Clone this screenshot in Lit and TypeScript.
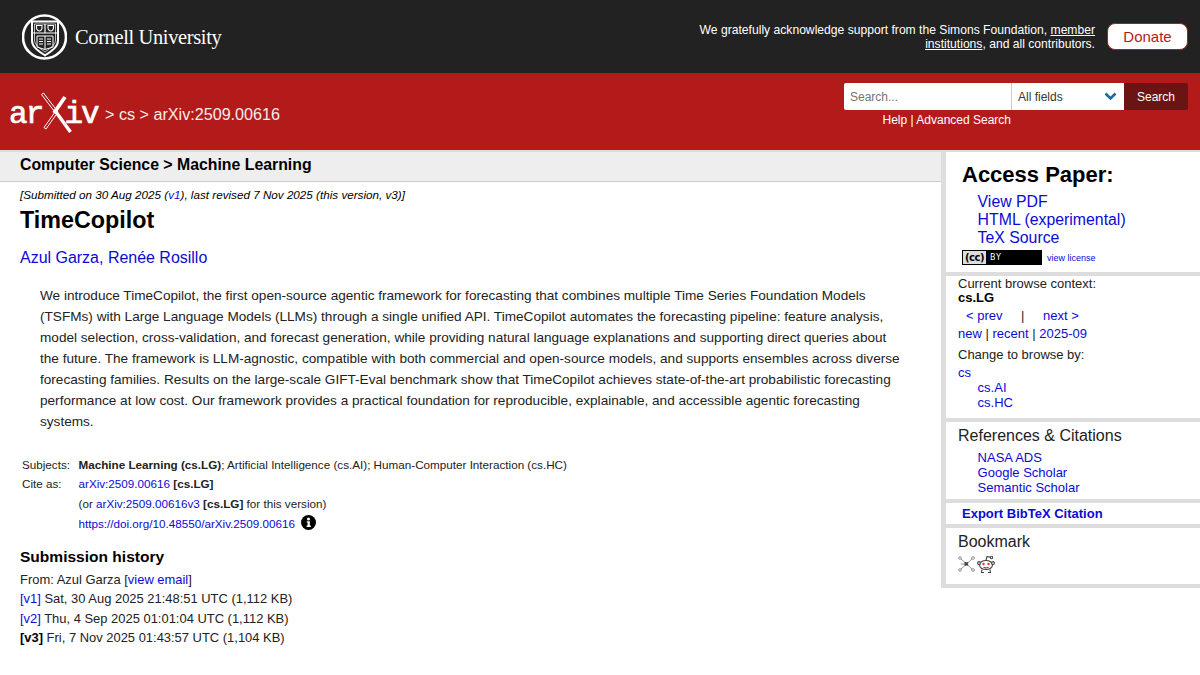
import { LitElement, html, css } from "lit";
import { customElement } from "lit/decorators.js";

@customElement("app-root")
export class AppRoot extends LitElement {
  static styles = css`
    :host {
      display: block;
      font-family: "Liberation Sans", Arial, sans-serif;
      color: #000;
      background: #fff;
      height: 675px;
      overflow: hidden;
    }
    a {
      color: #0a0ad4;
      text-decoration: none;
    }

    /* top strip */
    .cu {
      height: 73px;
      background: #222;
      display: flex;
      align-items: center;
      justify-content: space-between;
      padding: 0 12px 0 22px;
      box-sizing: border-box;
    }
    .cu-logo {
      display: flex;
      align-items: center;
      gap: 8px;
      color: #fff;
      font-family: "Liberation Serif", serif;
      font-size: 20.5px;
      letter-spacing: -0.38px;
    }
    .cu-logo span {
      padding-top: 2px;
    }
    .cu-right {
      display: flex;
      align-items: center;
      gap: 12px;
    }
    .thanks {
      width: 400px;
      text-align: right;
      color: #fff;
      font-size: 12.13px;
      line-height: 14px;
    }
    .thanks a {
      color: #fff;
      text-decoration: underline;
    }
    .donate {
      width: 81px;
      height: 27px;
      box-sizing: border-box;
      background: #fff;
      color: #b31b1b;
      border: 1px solid #b31b1b;
      border-radius: 8px;
      font-size: 15px;
      display: flex;
      align-items: center;
      justify-content: center;
    }

    /* red header */
    .head {
      height: 77px;
      background: #b31b1b;
      display: flex;
      justify-content: space-between;
      padding: 0 12px 0 9px;
      box-sizing: border-box;
    }
    .crumbs {
      display: flex;
      align-items: center;
      gap: 4px;
      height: 82px;
      color: #fff;
      font-size: 16.15px;
    }
    .crumbs span {
      opacity: 0.92;
    }
    .arxiv-logo {
      display: flex;
      align-items: center;
      color: #fff;
      font-family: "Liberation Mono", monospace;
      font-size: 31px;
      line-height: 1;
      width: 92px;
      height: 44px;
    }
    .arxiv-logo b {
      font-weight: 400;
      letter-spacing: -1.9px;
      -webkit-text-stroke: 0.7px #fff;
    }
    .arxiv-logo svg {
      margin: -2px -8px 0 -1px;
      flex: none;
    }
    .search {
      padding-top: 10px;
      display: flex;
      flex-direction: column;
      align-items: flex-start;
    }
    .search-row {
      display: flex;
      height: 27px;
      font-size: 12px;
    }
    .search-input {
      width: 168px;
      background: #fff;
      color: #757575;
      box-sizing: border-box;
      padding-left: 6px;
      display: flex;
      align-items: center;
      border-radius: 2px 0 0 2px;
      border-right: 1px solid #ccc;
    }
    .search-field {
      width: 112px;
      background: #fff;
      color: #363636;
      box-sizing: border-box;
      padding: 0 7px 0 6px;
      display: flex;
      align-items: center;
      justify-content: space-between;
    }
    .search-btn {
      width: 64px;
      background: #6b1414;
      color: #fff;
      display: flex;
      align-items: center;
      justify-content: center;
      border-radius: 0 2px 2px 0;
    }
    .search-links {
      margin: 3px 0 0 38.5px;
      color: #fff;
      font-size: 12px;
      line-height: 14px;
    }
    .search-links a {
      color: #fff;
    }

    /* body */
    .page {
      display: flex;
      border-top: 2px solid #ddd;
    }
    .main {
      width: 941px;
      flex: none;
    }
    .subject {
      height: 30px;
      box-sizing: border-box;
      background: #eee;
      border-bottom: 1px solid #ccc;
      padding: 4px 20px 0;
      font-size: 15.84px;
      line-height: 18px;
      font-weight: 700;
    }
    .content {
      padding: 0 20px;
    }
    .dateline {
      font-size: 11.68px;
      font-style: italic;
      line-height: 13px;
      margin-top: 6px;
    }
    h1 {
      margin: 5px 0 0;
      font-size: 23.3px;
      line-height: 28px;
    }
    .authors {
      margin-top: 15px;
      font-size: 15.98px;
      line-height: 18px;
      color: #0a0ad4;
    }
    .abstract {
      margin: 18px 20px 0 20px;
      font-size: 13.6px;
      line-height: 21px;
      color: #222;
    }
    .meta {
      margin: 23px 0 0 2px;
      display: grid;
      grid-template-columns: 56.5px 1fr;
      grid-template-rows: 19px repeat(3, 20px);
      font-size: 11.68px;
      color: #222;
      line-height: 20px;
    }
    .meta .row {
      display: flex;
      align-items: center;
      gap: 6px;
    }
    .info {
      width: 15px;
      height: 15px;
      flex: none;
      margin-top: -4px;
    }
    h2 {
      margin: 14px 0 0;
      font-size: 15.54px;
      line-height: 18px;
    }
    .history {
      margin-top: 4px;
      font-size: 12.95px;
      line-height: 19.4px;
      color: #222;
    }
    .history b {
      color: #000;
    }

    /* right column */
    .side {
      width: 259px;
      flex: none;
      height: 436px;
      box-sizing: border-box;
      border-left: 5px solid #ddd;
      border-bottom: 4px solid #ddd;
      display: flex;
      flex-direction: column;
    }
    .box {
      border-bottom: 4px solid #ddd;
      padding-left: 12px;
    }
    .box:last-child {
      border-bottom: 0;
    }
    .access {
      height: 124px;
      box-sizing: border-box;
      padding: 10px 0 0 16px;
    }
    .access h3 {
      margin: 0;
      font-size: 22px;
      line-height: 26px;
    }
    .access ul {
      list-style: none;
      margin: 5px 0 0 15.6px;
      padding: 0;
      font-size: 15.84px;
      line-height: 18px;
    }
    .license {
      display: flex;
      align-items: center;
      gap: 5px;
      margin-top: 3px;
      font-size: 9px;
    }
    .cc {
      width: 80px;
      height: 15px;
      box-sizing: border-box;
      background: #000;
      border: 1px solid #000;
      color: #fff;
      display: flex;
    }
    .cc-left {
      width: 23px;
      background: #ddd;
      color: #000;
      font-family: "DejaVu Sans", sans-serif;
      font-size: 10px;
      font-weight: 700;
      line-height: 13px;
      text-align: center;
      letter-spacing: -0.5px;
    }
    .cc-by {
      font-family: "DejaVu Sans", sans-serif;
      font-size: 8px;
      line-height: 13px;
      letter-spacing: 1px;
      padding-left: 4px;
    }
    .browse {
      height: 146px;
      box-sizing: border-box;
      font-size: 13px;
      line-height: 14px;
      padding-top: 1px;
      color: #222;
    }
    .browse b {
      color: #000;
    }
    .browse > div {
      line-height: 15px;
    }
    .prevnext {
      display: flex;
      margin: 3px 0 3px 8px;
      height: 15px;
    }
    .prevnext a:first-child {
      width: 55px;
    }
    .prevnext span {
      width: 22px;
    }
    .browse .by {
      margin: 5px 0 1px;
      line-height: 18px;
    }
    .indent {
      margin-left: 19.6px;
    }
    .refs {
      height: 81px;
      box-sizing: border-box;
      padding-top: 4px;
      font-size: 13px;
      line-height: 15px;
    }
    .refs h4,
    .bookmark h4 {
      margin: 0;
      font-weight: 400;
      font-size: 16px;
      line-height: 20px;
      color: #222;
    }
    .refs .list {
      margin-top: 4px;
    }
    .export {
      height: 25px;
      box-sizing: border-box;
      padding: 3px 0 0 16px;
      font-size: 13px;
      line-height: 15px;
      font-weight: 700;
    }
    .bookmark {
      padding-top: 4px;
    }
    .bookmark-icons {
      display: flex;
      gap: 2px;
      margin-top: 3px;
    }
  `;

  render() {
    return html`
      <div class="cu">
        <div class="cu-logo">
          <svg width="45" height="46" viewBox="0 0 45 46" fill="none" stroke="#fff">
            <circle cx="22.500" cy="23" r="21.500" stroke-width="2.600" />
            <path d="M10 7.500h26v19c0 6.500-6 10-13 15-7-5-13-8.500-13-15z" stroke-width="2" />
            <path d="M12.500 10h21v16c0 5-5 8-10.500 12-5.500-4-10.500-7-10.500-12z" stroke-width="0.700" />
            <path d="M11 19h24M23 10v9" stroke-width="1.200" />
            <path d="M14.500 11.500h5.500v2.500c0 1.500-1.500 3-2.700 3s-2.800-1.500-2.800-3zM26 11.500h5.500v2.500c0 1.500-1.500 3-2.700 3S26 15.500 26 14z" stroke-width="1.100" />
            <path d="M15 22h16v11l-8 2.500-8-2.500zM23 22v13M17 25h4M17 27.500h4M17 30h4M25 25h4M25 27.500h4M25 30h4" stroke-width="1" />
          </svg>
          <span>Cornell University</span>
        </div>
        <div class="cu-right">
          <div class="thanks">
            We gratefully acknowledge support from the Simons Foundation,
            <a href="#">member</a> <a href="#">institutions</a>, and all contributors.
          </div>
          <div class="donate">Donate</div>
        </div>
      </div>

      <div class="head">
        <div class="crumbs">
          <div class="arxiv-logo">
            <b>ar</b>
            <svg width="31" height="42" viewBox="0 0 31 42" fill="none">
              <path d="M.5 2.500l2-1.500 14.500 19-2 1.500z" stroke="#fff" stroke-width="1" />
              <path d="M15 20l14.500 20" stroke="#fff" stroke-width="3.400" />
              <path d="M24 5L13 21" stroke="#fff" stroke-width="3.800" />
              <path d="M3 35.500l2 1.500 11-15.500-2-1.500z" stroke="#fff" stroke-width="1" />
            </svg>
            <b>iv</b>
          </div>
          <span>&gt; cs &gt; arXiv:2509.00616</span>
        </div>
        <div class="search">
          <div class="search-row">
            <div class="search-input">Search...</div>
            <div class="search-field">
              <span>All fields</span>
              <svg width="13" height="9" viewBox="0 0 13 9" fill="none">
                <path d="M1.500 1.500l5 5 5-5" stroke="#1c6a9e" stroke-width="2.600" />
              </svg>
            </div>
            <div class="search-btn">Search</div>
          </div>
          <div class="search-links"><a href="#">Help</a> | <a href="#">Advanced Search</a></div>
        </div>
      </div>

      <div class="page">
        <div class="main">
          <div class="subject">Computer Science &gt; Machine Learning</div>
          <div class="content">
            <div class="dateline">
              [Submitted on 30 Aug 2025 (<a href="#">v1</a>), last revised 7 Nov 2025 (this version, v3)]
            </div>
            <h1>TimeCopilot</h1>
            <div class="authors"><a href="#">Azul Garza</a>, <a href="#">Renée Rosillo</a></div>
            <div class="abstract">
              We introduce TimeCopilot, the first open-source agentic framework for forecasting that combines multiple
              Time Series Foundation Models (TSFMs) with Large Language Models (LLMs) through a single unified API.
              TimeCopilot automates the forecasting pipeline: feature analysis, model selection, cross-validation, and
              forecast generation, while providing natural language explanations and supporting direct queries about
              the future. The framework is LLM-agnostic, compatible with both commercial and open-source models, and
              supports ensembles across diverse forecasting families. Results on the large-scale GIFT-Eval benchmark
              show that TimeCopilot achieves state-of-the-art probabilistic forecasting performance at low cost. Our
              framework provides a practical foundation for reproducible, explainable, and accessible agentic
              forecasting systems.
            </div>
            <div class="meta">
              <div>Subjects:</div>
              <div>
                <b>Machine Learning (cs.LG)</b>; Artificial Intelligence (cs.AI); Human-Computer Interaction (cs.HC)
              </div>
              <div>Cite as:</div>
              <div><a href="#">arXiv:2509.00616</a> <b>[cs.LG]</b></div>
              <div></div>
              <div>(or <a href="#">arXiv:2509.00616v3</a> <b>[cs.LG]</b> for this version)</div>
              <div></div>
              <div class="row">
                <a href="#">https://doi.org/10.48550/arXiv.2509.00616</a>
                <svg class="info" viewBox="0 0 15 15">
                  <circle cx="7.500" cy="7.500" r="7.500" fill="#000" />
                  <circle cx="7.500" cy="3.900" r="1.500" fill="#fff" />
                  <path d="M5.800 6.200h3v4.300h1v1.400H5.600v-1.400h1V7.600h-.8z" fill="#fff" />
                </svg>
              </div>
            </div>
            <h2>Submission history</h2>
            <div class="history">
              From: Azul Garza [<a href="#">view email</a>]<br />
              <a href="#">[v1]</a> Sat, 30 Aug 2025 21:48:51 UTC (1,112 KB)<br />
              <a href="#">[v2]</a> Thu, 4 Sep 2025 01:01:04 UTC (1,112 KB)<br />
              <b>[v3]</b> Fri, 7 Nov 2025 01:43:57 UTC (1,104 KB)
            </div>
          </div>
        </div>

        <div class="side">
          <div class="box access">
            <h3>Access Paper:</h3>
            <ul>
              <li><a href="#">View PDF</a></li>
              <li><a href="#">HTML (experimental)</a></li>
              <li><a href="#">TeX Source</a></li>
            </ul>
            <div class="license">
              <div class="cc">
                <div class="cc-left">(cc)</div>
                <div class="cc-by">BY</div>
              </div>
              <a href="#">view license</a>
            </div>
          </div>
          <div class="box browse">
            Current browse context:<br />
            <b>cs.LG</b>
            <div class="prevnext">
              <a href="#">&lt; prev</a><span>|</span><a href="#">next &gt;</a>
            </div>
            <div><a href="#">new</a> | <a href="#">recent</a> | <a href="#">2025-09</a></div>
            <div class="by">Change to browse by:</div>
            <div><a href="#">cs</a></div>
            <div class="indent"><a href="#">cs.AI</a></div>
            <div class="indent"><a href="#">cs.HC</a></div>
          </div>
          <div class="box refs">
            <h4>References &amp; Citations</h4>
            <div class="list indent">
              <div><a href="#">NASA ADS</a></div>
              <div><a href="#">Google Scholar</a></div>
              <div><a href="#">Semantic Scholar</a></div>
            </div>
          </div>
          <div class="box export"><a href="#">Export BibTeX Citation</a></div>
          <div class="box bookmark">
            <h4>Bookmark</h4>
            <div class="bookmark-icons">
              <svg width="17" height="18" viewBox="0 0 17 18" fill="none" stroke="#888" stroke-width="0.900">
                <path d="M2 3l13 12M15 3L2 15M8.500 9L3 9" />
                <path d="M6.800 7.300l3 3M9.800 7.300l-3 3" stroke="#444" stroke-width="1.800" />
                <circle cx="2" cy="3" r="1.300" fill="#fff" />
                <circle cx="15" cy="3" r="1.300" fill="#fff" />
                <circle cx="2" cy="15" r="1.300" fill="#fff" />
                <circle cx="15" cy="15" r="1.300" fill="#fff" />
              </svg>
              <svg width="18" height="19" viewBox="0 0 18 19" fill="none" stroke="#444" stroke-width="1.100">
                <ellipse cx="9" cy="10" rx="6.500" ry="4.500" fill="#fff" />
                <circle cx="2" cy="8" r="1.400" fill="#fff" />
                <circle cx="16" cy="8" r="1.400" fill="#fff" />
                <path d="M9 5.500l1-4 4 1" />
                <circle cx="14.500" cy="2.500" r="1.200" fill="#fff" />
                <path d="M5 14.500l-.5 3h2.500M13 14.500l.5 3H11M6.500 12.300c1.500.8 3.500.8 5 0" />
                <circle cx="6.500" cy="9" r="1.200" fill="#e8322b" stroke="none" />
                <circle cx="11.500" cy="9" r="1.200" fill="#e8322b" stroke="none" />
              </svg>
            </div>
          </div>
        </div>
      </div>
    `;
  }
}
